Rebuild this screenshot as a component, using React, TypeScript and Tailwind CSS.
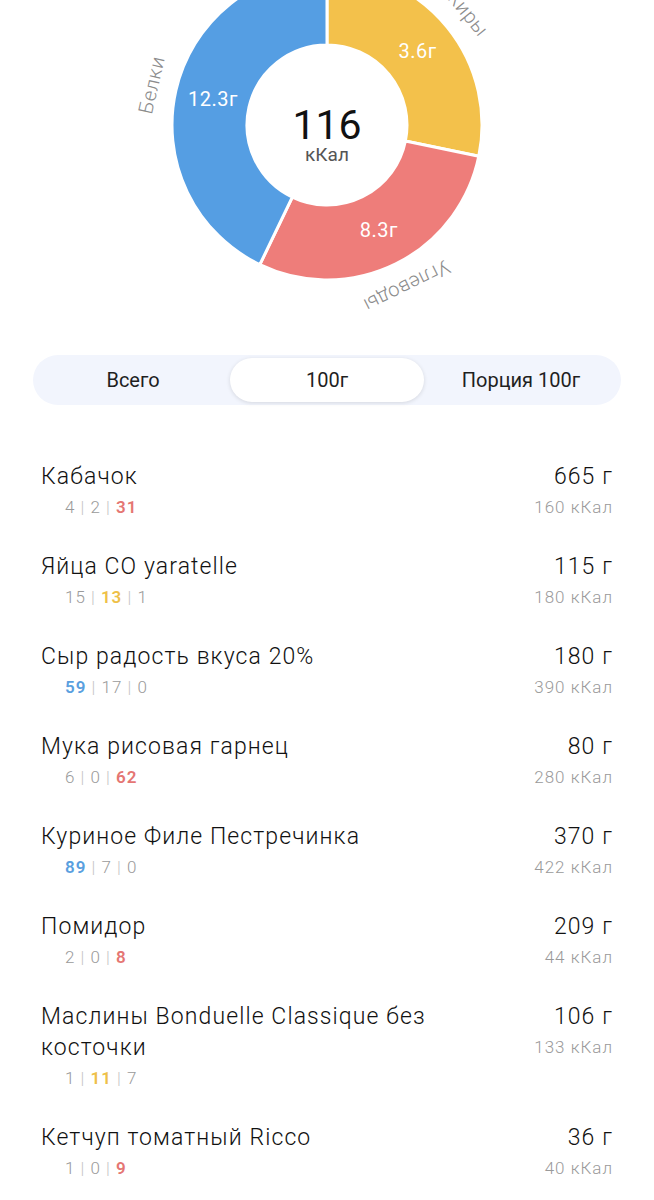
import { useState } from "react";

const CX = 327;
const CY = 125;
const R_OUT = 155;
const R_IN = 80;

const pt = (deg: number, r: number) => {
  const a = (deg * Math.PI) / 180;
  return [CX + r * Math.sin(a), CY - r * Math.cos(a)];
};

const arc = (from: number, to: number) => {
  const [x1, y1] = pt(from, R_OUT);
  const [x2, y2] = pt(to, R_OUT);
  const [x3, y3] = pt(to, R_IN);
  const [x4, y4] = pt(from, R_IN);
  const large = to - from > 180 ? 1 : 0;
  return `M${x1} ${y1} A${R_OUT} ${R_OUT} 0 ${large} 1 ${x2} ${y2} L${x3} ${y3} A${R_IN} ${R_IN} 0 ${large} 0 ${x4} ${y4} Z`;
};

// calories split: fat, carbs, protein
const segments = [
  { name: "Жиры", value: "3.6г", from: 0, to: 101.6, color: "#f3c14b" },
  { name: "Углеводы", value: "8.3г", from: 101.6, to: 205.7, color: "#ee7d7a" },
  { name: "Белки", value: "12.3г", from: 205.7, to: 360, color: "#559ee3" },
];

function Donut() {
  return (
    <svg width="654" height="330" className="block">
      {segments.map((s) => (
        <path key={s.name} d={arc(s.from, s.to)} fill={s.color} stroke="#ffffff" strokeWidth="3" />
      ))}
      {segments.map((s) => {
        const mid = (s.from + s.to) / 2;
        const [vx, vy] = pt(mid, 117);
        const [lx, ly] = pt(mid, 180);
        return (
          <g key={s.name + "-t"}>
            <text x={vx} y={vy} fill="#ffffff" fontSize="20" letterSpacing="0.5" textAnchor="middle" dominantBaseline="central">
              {s.value}
            </text>
            <text
              x={lx}
              y={ly}
              fill="#8c8c8c"
              fontSize="20"
              fontWeight="300"
              letterSpacing="0.5"
              textAnchor="middle"
              dominantBaseline="central"
              transform={`rotate(${mid > 180 ? mid - 360 : mid} ${lx} ${ly})`}
            >
              {s.name}
            </text>
          </g>
        );
      })}
      <text x={CX} y={125} fill="#111111" fontSize="41" textAnchor="middle" dominantBaseline="central">
        116
      </text>
      <text x={CX} y={154} fill="#555555" fontSize="19" textAnchor="middle" dominantBaseline="central">
        кКал
      </text>
    </svg>
  );
}

const tabs = ["Всего", "100г", "Порция 100г"];

const items: { name: string; weight: string; kcal: string; p: number; f: number; c: number; hl: "p" | "f" | "c" }[] = [
  { name: "Кабачок", weight: "665 г", kcal: "160 кКал", p: 4, f: 2, c: 31, hl: "c" },
  { name: "Яйца CO yaratelle", weight: "115 г", kcal: "180 кКал", p: 15, f: 13, c: 1, hl: "f" },
  { name: "Сыр радость вкуса 20%", weight: "180 г", kcal: "390 кКал", p: 59, f: 17, c: 0, hl: "p" },
  { name: "Мука рисовая гарнец", weight: "80 г", kcal: "280 кКал", p: 6, f: 0, c: 62, hl: "c" },
  { name: "Куриное Филе Пестречинка", weight: "370 г", kcal: "422 кКал", p: 89, f: 7, c: 0, hl: "p" },
  { name: "Помидор", weight: "209 г", kcal: "44 кКал", p: 2, f: 0, c: 8, hl: "c" },
  { name: "Маслины Bonduelle Classique без косточки", weight: "106 г", kcal: "133 кКал", p: 1, f: 11, c: 7, hl: "f" },
  { name: "Кетчуп томатный Ricco", weight: "36 г", kcal: "40 кКал", p: 1, f: 0, c: 9, hl: "c" },
];

function Num({ v, on, color }: { v: number; on: boolean; color: string }) {
  return on ? <span className={`font-semibold ${color}`}>{v}</span> : <span>{v}</span>;
}

export default function App() {
  const [tab, setTab] = useState(1);

  return (
    <div className="min-h-screen bg-white" style={{ fontFamily: "Roboto, 'Noto Sans', sans-serif" }}>
      <Donut />

      <div className="mx-[33px] mt-[25px] grid h-[50px] grid-cols-3 rounded-full bg-[#f2f5fd] p-[3px]">
        {tabs.map((t, i) => (
          <button
            key={t}
            onClick={() => setTab(i)}
            className={`rounded-full text-[20px] text-[#1f1f1f] ${
              tab === i ? "bg-white shadow-[0_1px_4px_rgba(0,0,0,0.12)]" : ""
            }`}
          >
            {t}
          </button>
        ))}
      </div>

      <div className="px-[41px] pt-[56px]">
        {items.map((it) => (
          <div key={it.name} className="flex justify-between pb-[29px]">
            <div className="min-w-0 flex-1 pr-6">
              <div className="text-[23px] font-light leading-[31px] tracking-[1.1px] text-[#111111]">{it.name}</div>
              <div className="pl-6 text-[17px] font-light leading-[30px] tracking-[1px] text-[#9a9a9a]">
                <Num v={it.p} on={it.hl === "p"} color="text-[#5a9fdf]" />
                <span className="text-[#c4c4c4]"> | </span>
                <Num v={it.f} on={it.hl === "f"} color="text-[#eec048]" />
                <span className="text-[#c4c4c4]"> | </span>
                <Num v={it.c} on={it.hl === "c"} color="text-[#e57673]" />
              </div>
            </div>
            <div className="shrink-0 text-right">
              <div className="text-[23px] font-light leading-[31px] tracking-[1.1px] text-[#111111]">{it.weight}</div>
              <div className="text-[17px] font-light leading-[30px] tracking-[1px] text-[#9a9a9a]">{it.kcal}</div>
            </div>
          </div>
        ))}
      </div>
    </div>
  );
}
